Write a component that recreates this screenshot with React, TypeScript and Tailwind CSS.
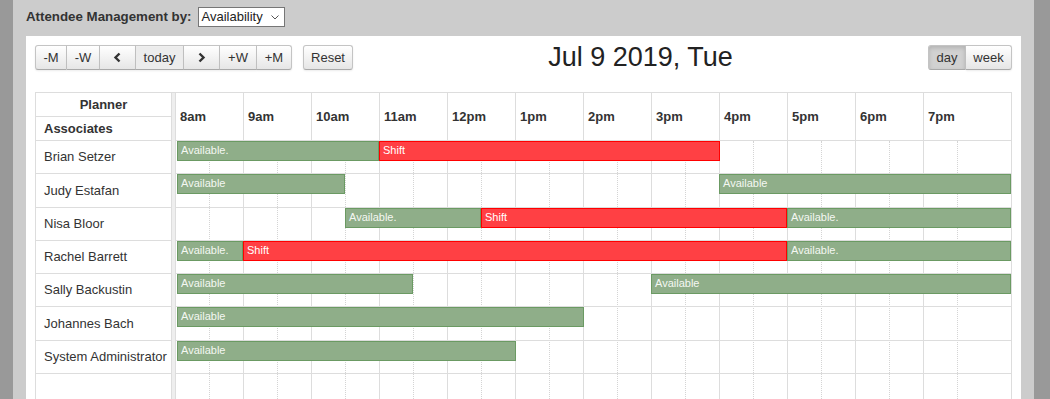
import type { ReactNode } from "react";

type Bar = { label: string; start: number; end: number | "end"; kind: "free" | "shift" };
type Row = { name: string; h: string; bars: Bar[] };

const HOURS = ["8am", "9am", "10am", "11am", "12pm", "1pm", "2pm", "3pm", "4pm", "5pm", "6pm", "7pm"];
const COL = 68;

const rows: Row[] = [
  {
    name: "Brian Setzer",
    h: "h-[33px]",
    bars: [
      { label: "Available.", start: 8, end: 11, kind: "free" },
      { label: "Shift", start: 11, end: 16, kind: "shift" },
    ],
  },
  {
    name: "Judy Estafan",
    h: "h-[34px]",
    bars: [
      { label: "Available", start: 8, end: 10.5, kind: "free" },
      { label: "Available", start: 16, end: "end", kind: "free" },
    ],
  },
  {
    name: "Nisa Bloor",
    h: "h-[33px]",
    bars: [
      { label: "Available.", start: 10.5, end: 12.5, kind: "free" },
      { label: "Shift", start: 12.5, end: 17, kind: "shift" },
      { label: "Available.", start: 17, end: "end", kind: "free" },
    ],
  },
  {
    name: "Rachel Barrett",
    h: "h-[33px]",
    bars: [
      { label: "Available.", start: 8, end: 9, kind: "free" },
      { label: "Shift", start: 9, end: 17, kind: "shift" },
      { label: "Available.", start: 17, end: "end", kind: "free" },
    ],
  },
  {
    name: "Sally Backustin",
    h: "h-[33px]",
    bars: [
      { label: "Available", start: 8, end: 11.5, kind: "free" },
      { label: "Available", start: 15, end: "end", kind: "free" },
    ],
  },
  {
    name: "Johannes Bach",
    h: "h-[34px]",
    bars: [{ label: "Available", start: 8, end: 14, kind: "free" }],
  },
  {
    name: "System Administrator",
    h: "h-[33px]",
    bars: [{ label: "Available", start: 8, end: 13, kind: "free" }],
  },
];

// x of the hour line, relative to the start of the time area
const line = (h: number) => (h - 8) * COL - 1;

const Btn = ({ children, className = "" }: { children: ReactNode; className?: string }) => (
  <div
    className={`flex h-[25px] items-center justify-center border border-[#c4c4c4] border-b-[#a9a9a9] bg-gradient-to-b from-white to-[#e6e6e6] text-[13px] text-[#333] shadow-[inset_0_1px_0_rgba(255,255,255,0.2),0_1px_2px_rgba(0,0,0,0.08)] ${className}`}
  >
    {children}
  </div>
);

const Chevron = ({ dir }: { dir: "l" | "r" }) => (
  <svg width="9" height="11" viewBox="0 0 9 11">
    <path
      d={dir === "l" ? "M6.5 1.5 L2.5 5.5 L6.5 9.5" : "M2.5 1.5 L6.5 5.5 L2.5 9.5"}
      fill="none"
      stroke="#333"
      strokeWidth="2.4"
    />
  </svg>
);

const App = () => {
  return (
    <div className="flex h-[399px] w-[1050px] overflow-hidden bg-[#999] pl-[13px] pr-[16px] font-['Liberation_Sans',Arial,sans-serif] text-[#333]">
      <div className="flex flex-1 flex-col bg-[#ccc] px-[13px]">
        {/* top bar */}
        <div className="flex h-[36px] items-start gap-[6px] pt-[7px]">
          <span className="mt-[3px] text-[13.3px] font-bold leading-none text-[#333]">Attendee Management by:</span>
          <div className="flex h-[20px] w-[87px] items-center justify-between border border-[#767676] bg-white pl-[3px] pr-[5px] text-[13px] text-[#222]">
            <span>Availability</span>
            <svg width="8" height="5" viewBox="0 0 8 5">
              <path d="M0.5 0.5 L4 4 L7.5 0.5" fill="none" stroke="#555" strokeWidth="1" />
            </svg>
          </div>
        </div>

        {/* white panel */}
        <div className="flex flex-1 flex-col overflow-hidden bg-white pl-[9px] pr-[9px] pt-[9px]">
          {/* toolbar */}
          <div className="flex h-[25px] items-center">
            <div className="flex w-[318px] items-center">
              <Btn className="w-[32px] rounded-l-[3px]">-M</Btn>
              <Btn className="w-[33px] border-l-0">-W</Btn>
              <Btn className="w-[36px] border-l-0">
                <Chevron dir="l" />
              </Btn>
              <Btn className="w-[48px] border-l-0 !bg-none !bg-[#ececec] text-[#8a8a8a]">today</Btn>
              <Btn className="w-[36px] border-l-0">
                <Chevron dir="r" />
              </Btn>
              <Btn className="w-[37px] border-l-0">+W</Btn>
              <Btn className="w-[35px] rounded-r-[3px] border-l-0">+M</Btn>
              <Btn className="ml-[11px] w-[50px] rounded-[3px]">Reset</Btn>
            </div>
            <div className="flex-1 text-center text-[27px] leading-none text-[#222]">Jul 9 2019, Tue</div>
            <div className="flex items-center">
              <Btn className="w-[38px] rounded-l-[3px] !bg-none !bg-[#d1d1d1] shadow-[inset_0_2px_4px_rgba(0,0,0,0.15)]">
                day
              </Btn>
              <Btn className="w-[46px] rounded-r-[3px] border-l-0">week</Btn>
            </div>
          </div>

          {/* planner grid */}
          <div className="mt-[22px] flex flex-1 border-t border-[#ddd]">
            {/* resources column */}
            <div className="flex w-[137px] flex-col border-x border-[#ddd] text-[13px]">
              <div className="flex h-[24px] items-center justify-center border-b border-[#ddd] font-bold">Planner</div>
              <div className="flex h-[24px] items-center border-b border-[#ddd] pl-[8px] font-bold">Associates</div>
              {rows.map((r) => (
                <div key={r.name} className={`flex ${r.h} items-center whitespace-nowrap border-b border-[#ddd] pl-[8px]`}>
                  {r.name}
                </div>
              ))}
            </div>

            <div className="w-[4px] border-r border-[#ddd] bg-[#eee]" />

            {/* timeline */}
            <div className="flex w-[836px] flex-col">
              <div className="flex h-[48px] border-b border-[#ddd]">
                {HOURS.map((h, i) => (
                  <div
                    key={h}
                    className={`flex items-center border-r border-[#ddd] pl-[4px] text-[13px] font-bold ${
                      i === HOURS.length - 1 ? "w-[88px]" : "w-[68px]"
                    }`}
                  >
                    {h}
                  </div>
                ))}
              </div>

              <div className="relative flex-1">
                {/* background slots */}
                <div className="absolute inset-0 flex">
                  {HOURS.map((h, i) => (
                    <div
                      key={h}
                      className={`flex border-r border-[#ddd] ${i === HOURS.length - 1 ? "w-[88px]" : "w-[68px]"}`}
                    >
                      <div className="w-[33px]" />
                      <div className="border-l border-dotted border-[#d4d4d4]" />
                    </div>
                  ))}
                </div>

                {rows.map((r) => (
                  <div key={r.name} className={`relative ${r.h} border-b border-[#ddd]`}>
                    {r.bars.map((b, i) => {
                      const left = b.start === 8 ? 1 : line(b.start);
                      const right = b.end === "end" ? 834 : line(b.end) - (i < r.bars.length - 1 ? 1 : 0);
                      return (
                        <div
                          key={i}
                          className={`absolute top-0 flex h-[20px] items-center overflow-hidden whitespace-nowrap border pb-[1px] pl-[3px] text-[11px] ${
                            b.kind === "shift"
                              ? "border-[#f00] bg-[#ff4044] text-white"
                              : "border-[#6b9a63] bg-[#8fae89] text-[#f4f7f2]"
                          }`}
                          style={{ left, width: right - left + 1 }}
                        >
                          {b.label}
                        </div>
                      );
                    })}
                  </div>
                ))}
              </div>
            </div>
          </div>
        </div>
      </div>
    </div>
  );
};

export default App;
